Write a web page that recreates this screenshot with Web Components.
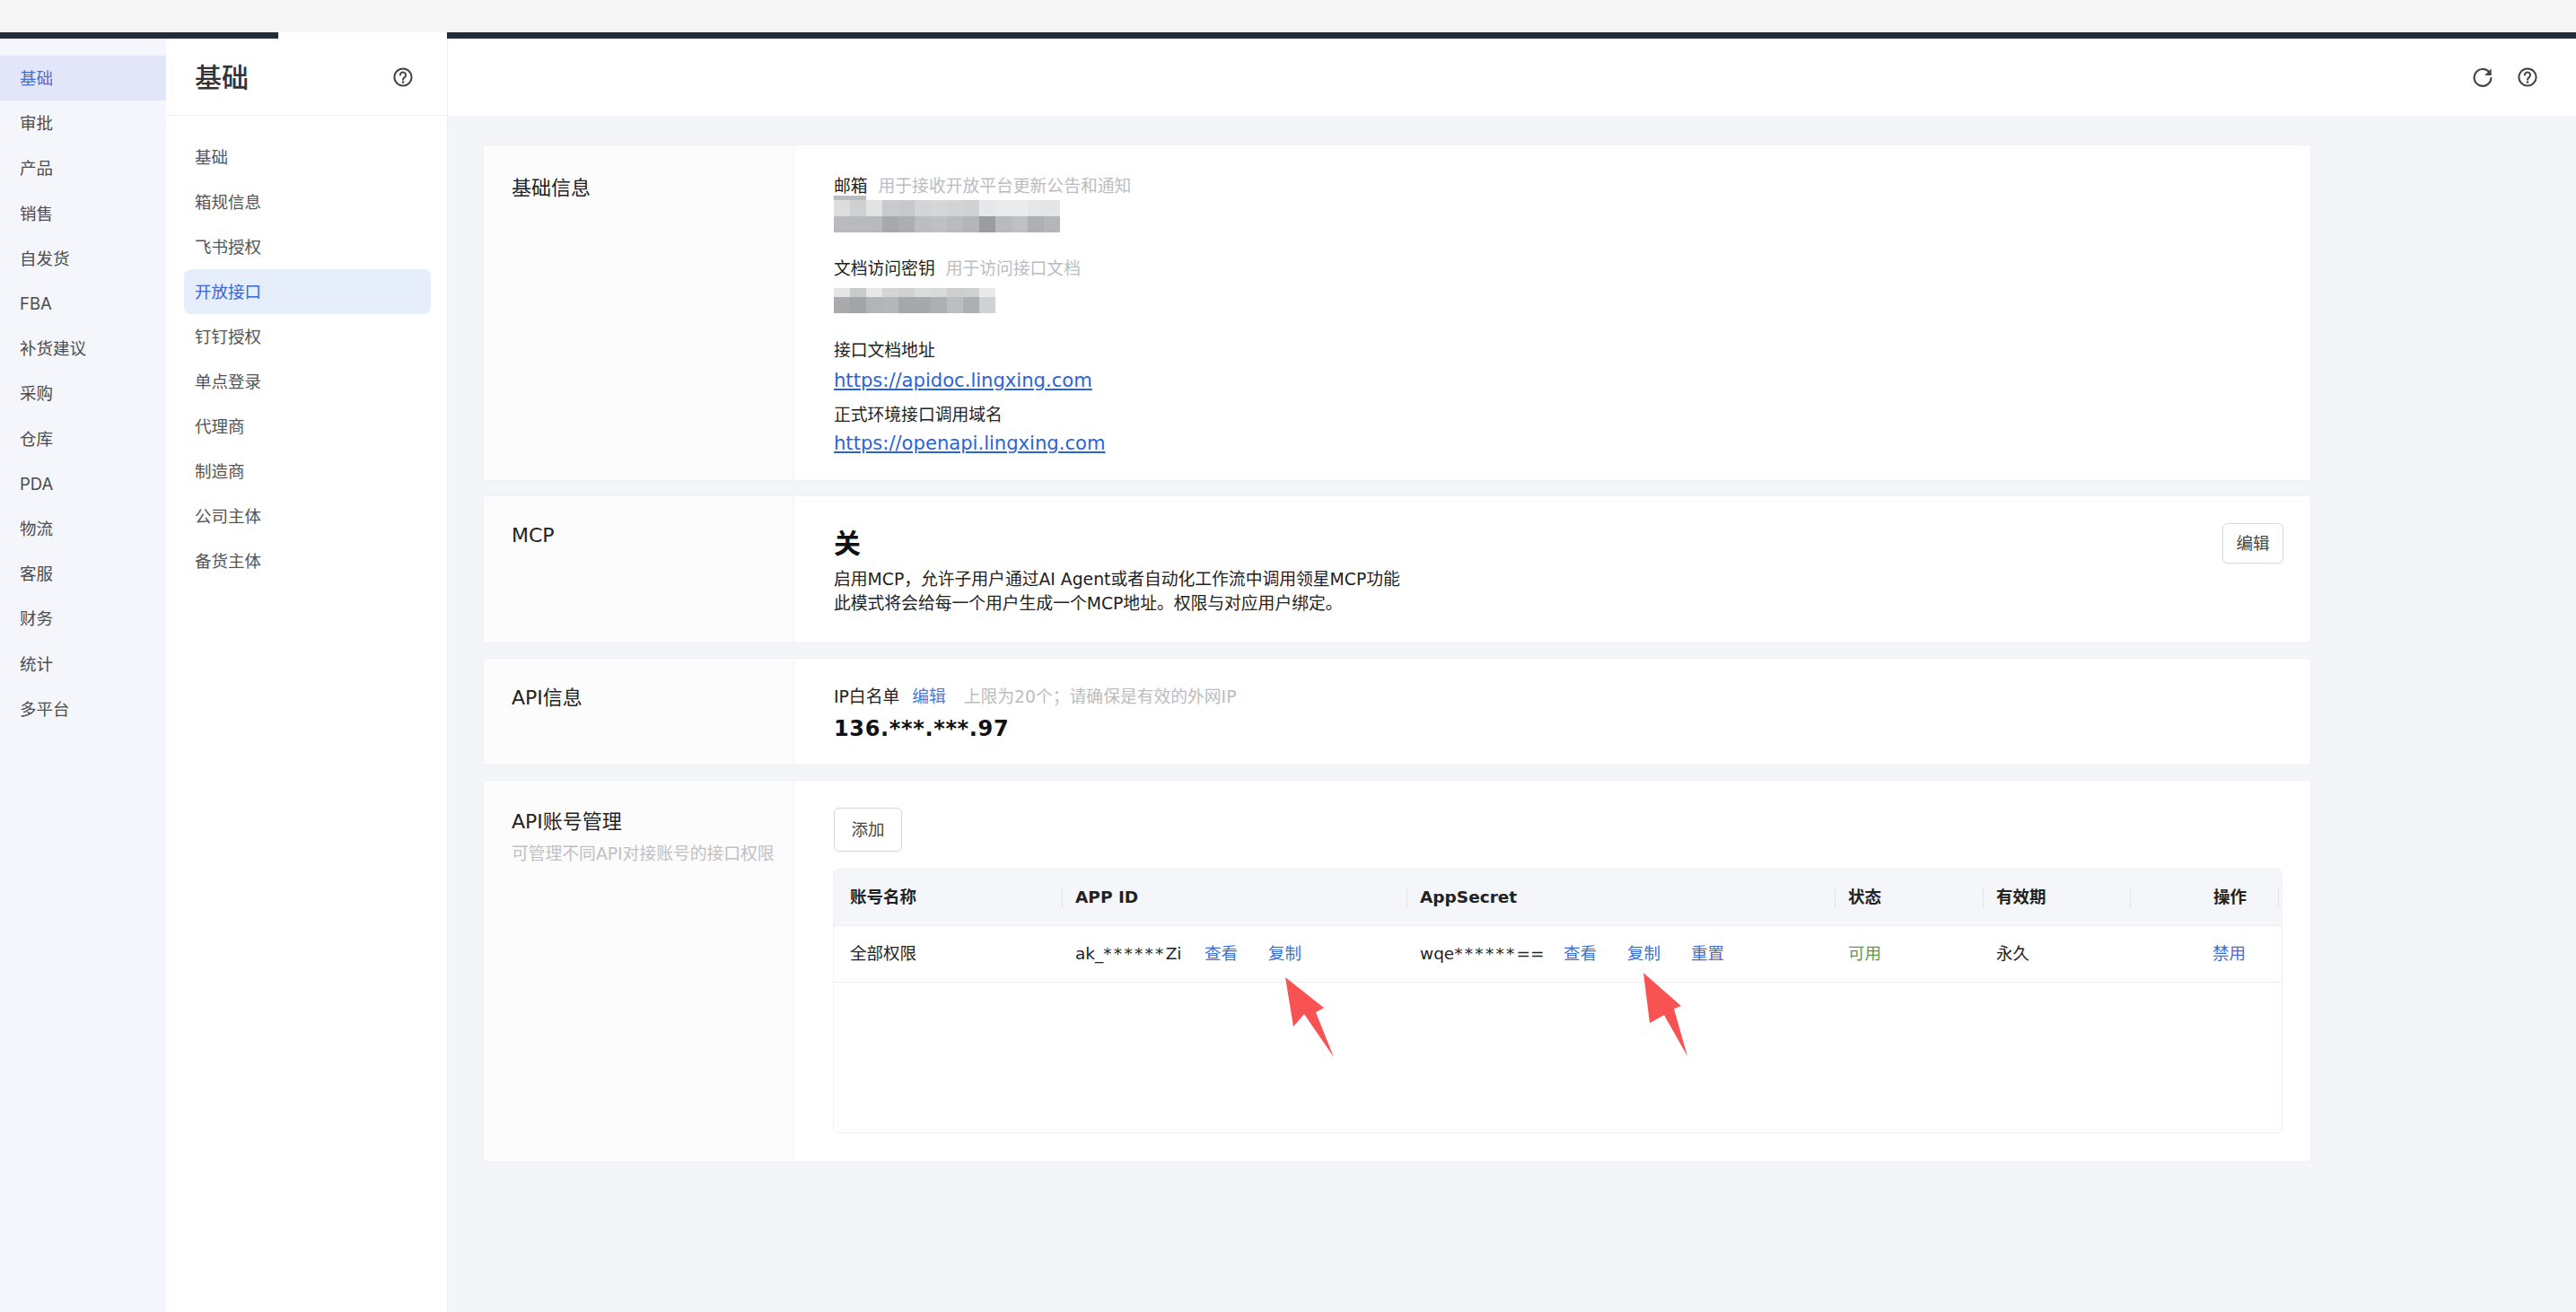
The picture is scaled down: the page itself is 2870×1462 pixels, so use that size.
<!DOCTYPE html>
<html lang="zh"><head><meta charset="utf-8"><title>基础</title>
<style>
html,body{margin:0;padding:0;background:#f4f5f9}
body{width:2870px;height:1462px;overflow:hidden}
</style></head><body>
<app-shell></app-shell>
<script>
const CJK='"Noto Sans CJK SC"';
const UI=`"DejaVu Sans",${CJK},sans-serif`;
const NAV=`Inter,${CJK},sans-serif`;
function def(name,css,html,init){
  customElements.define(name,class extends HTMLElement{
    constructor(){super();const r=this.attachShadow({mode:'open'});
      r.innerHTML=`<style>${css}</style>${typeof html==='function'?html(this):html}`;}
    connectedCallback(){ if(init) init(this); }
  });
}
const help=`<svg viewBox="0 0 24 24" width="24" height="24" fill="none" stroke="#444" stroke-width="2"><circle cx="12" cy="12" r="9.6"/><path d="M8.9 9.6a3.1 3.1 0 1 1 4.9 2.5c-1.1.8-1.8 1.3-1.8 2.7" stroke-linecap="round"/><circle cx="12" cy="17.4" r="1.25" fill="#444" stroke="none"/></svg>`;
def('help-icon',':host{display:inline-flex;width:24px;height:24px}',help);
def('refresh-icon',':host{display:inline-flex;width:24px;height:24px}',`<svg viewBox="0 0 24 24" width="24" height="24" fill="none"><path d="M20.6 8.6A9.4 9.4 0 1 0 21.4 13" stroke="#444" stroke-width="2.2" stroke-linecap="round"/><path d="M21.6 2.6v7.4h-7.4z" fill="#444"/></svg>`);

def('rail-item',`:host{display:flex;align-items:center;height:50.2px;padding-left:22px;font:18.5px/26px ${NAV};color:#4a4c50}
:host([active]){background:#e3e6f8;color:#3f6fd8}`,'<slot></slot>');
def('rail-nav',`:host{display:block;width:185px;background:#f4f6fb;padding-top:19px;box-sizing:border-box;flex:none}`,'<slot></slot>');

def('nav-item',`:host{display:flex;align-items:center;height:50.1px;margin:0 18px 0 20px;padding-left:12px;border-radius:8px;font:18.5px/26px ${NAV};color:#555}
:host([active]){background:#e6edfb;color:#3a66d8}`,'<slot></slot>');
def('side-nav',`:host{display:flex;flex-direction:column;width:314px;flex:none;background:#fff;border-right:1px solid #eeeef2;box-sizing:border-box}
header{display:flex;align-items:center;justify-content:space-between;height:86px;padding:0 37px 0 32px;border-bottom:1px solid #efeff2;flex:none;box-sizing:border-box}
h1{margin:0;font:500 30px/40px ${NAV};color:#333}
.list{padding-top:20.5px}`,`<header><h1>基础</h1><help-icon></help-icon></header><div class="list"><slot></slot></div>`);

def('top-bar',`:host{display:flex;align-items:center;justify-content:flex-end;gap:26px;height:86px;background:#fff;padding-right:42px;box-sizing:border-box;flex:none}`,`<refresh-icon></refresh-icon><help-icon></help-icon>`);

def('info-card',`:host{display:grid;grid-template-columns:346px 1fr;width:2037px;background:#fff;border:1px solid #f0f0f3;border-radius:4px;box-sizing:border-box;overflow:hidden;font:18.8px/26px ${UI};color:#222}
.l{background:#fcfcfd;border-right:1px solid #f3f3f6;padding:var(--lt,32px) 0 0 31px;box-sizing:border-box}
.t{font:22px/28px ${UI};color:#222}
.s{font:18.8px/26px ${UI};color:#c0c0c4;margin-top:9px}
.r{padding:var(--pt,32px) 30px 0 44px;box-sizing:border-box;min-width:0}`,
h=>`<div class="l"><div class="t">${h.getAttribute('heading')}</div>${h.hasAttribute('sub')?`<div class="s">${h.getAttribute('sub')}</div>`:''}</div><div class="r"><slot></slot></div>`);

def('pixel-mask',`:host{display:block}
.row{display:flex}.row i{display:block;width:18px}`,
h=>{const rows=JSON.parse(h.getAttribute('rows'));
  return rows.map(r=>`<div class="row" style="height:${r.h}px">${r.c.map(c=>`<i style="background:${c}"></i>`).join('')}</div>`).join('');});

def('field-label',`:host{display:block;font:18.8px/26px ${UI};color:#222}
.h{color:#bcbcc0;margin-left:var(--hint-gap,12px)}`,
h=>`<slot></slot><span class="h">${h.getAttribute('hint')||''}</span>`);
def('doc-link',`:host{display:block;line-height:30px}
a{font:21.1px/30px ${UI};color:#2b63d9;text-decoration:underline}`,h=>`<a href="#"><slot></slot></a>`);
def('plain-button',`:host{display:inline-flex;align-items:center;justify-content:center;box-sizing:border-box;border:1px solid #d8d8dc;border-radius:6px;background:#fff;font:18.5px/26px ${UI};color:#444;box-shadow:0 1px 2px rgba(0,0,0,.04)}`,'<slot></slot>');

def('api-table',`:host{display:block;width:1615px;height:295px;border:1px solid #f0f0f3;border-radius:6px;box-sizing:border-box;overflow:hidden;font:18.5px/26px ${UI};color:#222;background:#fff}
.g{display:grid;grid-template-columns:254px 384px 477px 165px 164px 1fr}
.h{background:#f5f6f9;height:63px;font-weight:600;color:#222;border-bottom:1px solid #eeeef1;box-sizing:border-box}
.h>div{display:flex;align-items:center}
.h>div:not(:first-child)::before{content:"";width:1px;height:22px;background:#e2e3e8;margin-right:14px;flex:none}
.h>div:first-child{padding-left:18px}
.h .op span{margin-left:auto;margin-right:35px}
.h .op::after{content:"";width:1px;height:22px;background:#e2e3e8;margin-right:3px;flex:none}
.b{height:63px;border-bottom:1px solid #eeeef1;box-sizing:border-box}
.b>div{display:flex;align-items:center;padding-left:15px}
.b>div:first-child{padding-left:18px}
a{color:#3d6fd9;text-decoration:none}
.ok{color:#4f9d53}
.v{display:inline-block;white-space:nowrap}
.v i{font-style:normal;letter-spacing:2.3px}
.op2{justify-content:flex-end;padding-right:40px}`,
`<div class="g h"><div>账号名称</div><div>APP ID</div><div>AppSecret</div><div>状态</div><div>有效期</div><div class="op"><span>操作</span></div></div>
<div class="g b"><div>全部权限</div>
<div><span class="v" style="width:124px">ak_<i>******</i>Zi</span><a href="#" style="margin-left:20px">查看</a><a href="#" style="margin-left:34px">复制</a></div>
<div><span class="v" style="width:139px">wqe<i>******</i>==</span><a href="#" style="margin-left:21px">查看</a><a href="#" style="margin-left:34px">复制</a><a href="#" style="margin-left:34px">重置</a></div>
<div class="ok">可用</div><div>永久</div><div class="op2"><a href="#">禁用</a></div></div>`);

def('red-arrow',`:host{position:absolute;left:0;top:0;width:2870px;height:1462px;pointer-events:none}`,
`<svg width="2870" height="1462" viewBox="0 0 2870 1462"><polygon fill="#f95252" points="1432,1089 1475,1123 1466,1128 1486,1178 1453,1130 1441,1144"/><polygon fill="#f95252" points="1831,1084 1873,1121 1865,1124 1880,1177 1854,1131 1838,1140"/></svg>`);

const A1=['#dcdddf','#cfd0d2','#e2e3e5','#c9cacd','#c7c8cb','#d3d4d6','#d5d6d8','#d2d3d5','#d0d1d3','#e6e7e8','#e9eaeb','#eaebec','#e5e6e7','#e4e5e6'];
const B1=['#b9babd','#b9babd','#b9babd','#a8a9ae','#adaeb2','#bcbdc0','#bfc0c3','#babbbe','#b4b5b9','#9b9ba1','#b9babe','#bfc0c3','#aeafb3','#b5b6ba'];
const T1=['#bcbdc0','#bcbdc0'];
const A2=['#e4e5e7','#c9cacc','#e6e7e8','#d3d4d6','#d0d1d3','#dadbdc','#d8d9da','#cdced0','#cfd0d2','#e8e9ea'];
const B2=['#a9aaae','#a3a4a8','#b3b4b8','#b5b6ba','#a5a7ab','#a6a8ac','#aeafb3','#bcbdc0','#aeafb3','#d0d1d4'];
const m1=JSON.stringify([{h:5,c:T1},{h:18,c:A1},{h:18,c:B1}]).replace(/"/g,'&quot;');
const m2=JSON.stringify([{h:10,c:A2},{h:18,c:B2}]).replace(/"/g,'&quot;');

def('app-shell',`:host{display:block;position:relative;width:2870px;height:1462px;overflow:hidden;background:#f4f5f9}
.strip{height:36px;background:#f6f6f6}
.bar{display:flex;height:7px}.bar b{background:#222d38}.bar .a{width:310px}.bar .w{width:188px;background:#fff}.bar .z{flex:1}
.cols{display:flex;height:1419px}
.cols>rail-nav{height:1419px}
.main{flex:1;display:flex;flex-direction:column;min-width:0}
.content{padding:32px 0 0 39px;display:flex;flex-direction:column;gap:16px}
info-card.c1{height:375px;--pt:33px;--lt:34px}
info-card.c2{height:165px;--pt:30px;--lt:30px}
info-card.c3{height:120px;--pt:30px;--lt:30px}
info-card.c4{height:426px;--pt:30px;--lt:32px}
.mcp{display:flex;justify-content:space-between;align-items:flex-start}
.big{font:700 30px/40px ${UI};color:#111;padding-top:3px}
.desc{font:18.8px/26.5px ${UI};color:#222;margin-top:7px}
.ip{font:700 24px/30px ${UI};color:#111;margin-top:7px;letter-spacing:.65px}
.edit{color:#3f7be0;margin:0 20px 0 14px}
.muted{color:#bcbcc0}
.line{font:18.8px/26px ${UI};color:#222}
`,
`<div class="strip"></div>
<div class="bar"><b class="a"></b><b class="w"></b><b class="z"></b></div>
<div class="cols">
<rail-nav>
<rail-item active>基础</rail-item><rail-item>审批</rail-item><rail-item>产品</rail-item><rail-item>销售</rail-item><rail-item>自发货</rail-item><rail-item>FBA</rail-item><rail-item>补货建议</rail-item><rail-item>采购</rail-item><rail-item>仓库</rail-item><rail-item>PDA</rail-item><rail-item>物流</rail-item><rail-item>客服</rail-item><rail-item>财务</rail-item><rail-item>统计</rail-item><rail-item>多平台</rail-item>
</rail-nav>
<side-nav>
<nav-item>基础</nav-item><nav-item>箱规信息</nav-item><nav-item>飞书授权</nav-item><nav-item active>开放接口</nav-item><nav-item>钉钉授权</nav-item><nav-item>单点登录</nav-item><nav-item>代理商</nav-item><nav-item>制造商</nav-item><nav-item>公司主体</nav-item><nav-item>备货主体</nav-item>
</side-nav>
<div class="main">
<top-bar></top-bar>
<div class="content">
<info-card class="c1" heading="基础信息">
<field-label hint="用于接收开放平台更新公告和通知">邮箱</field-label>
<pixel-mask style="margin-top:-3px" rows="${m1}"></pixel-mask>
<field-label hint="用于访问接口文档" style="margin-top:28px">文档访问密钥</field-label>
<pixel-mask style="margin-top:8px" rows="${m2}"></pixel-mask>
<div class="line" style="margin-top:29px">接口文档地址</div>
<doc-link style="margin-top:5px">https://apidoc.lingxing.com</doc-link>
<div class="line" style="margin-top:10px">正式环境接口调用域名</div>
<doc-link style="margin-top:3px">https://openapi.lingxing.com</doc-link>
</info-card>
<info-card class="c2" heading="MCP">
<div class="mcp"><div><div class="big">关</div><div class="desc">启用MCP，允许子用户通过AI Agent或者自动化工作流中调用领星MCP功能<br>此模式将会给每一个用户生成一个MCP地址。权限与对应用户绑定。</div></div>
<plain-button style="width:68px;height:45px">编辑</plain-button></div>
</info-card>
<info-card class="c3" heading="API信息">
<div class="line">IP白名单<span class="edit">编辑</span><span class="muted">上限为20个；请确保是有效的外网IP</span></div>
<div class="ip">136.***.***.97</div>
</info-card>
<info-card class="c4" heading="API账号管理" sub="可管理不同API对接账号的接口权限">
<plain-button style="width:76px;height:49px">添加</plain-button>
<api-table style="margin-top:19px;margin-left:-1px"></api-table>
</info-card>
</div></div></div>
<red-arrow></red-arrow>`);
</script>
</body></html>
